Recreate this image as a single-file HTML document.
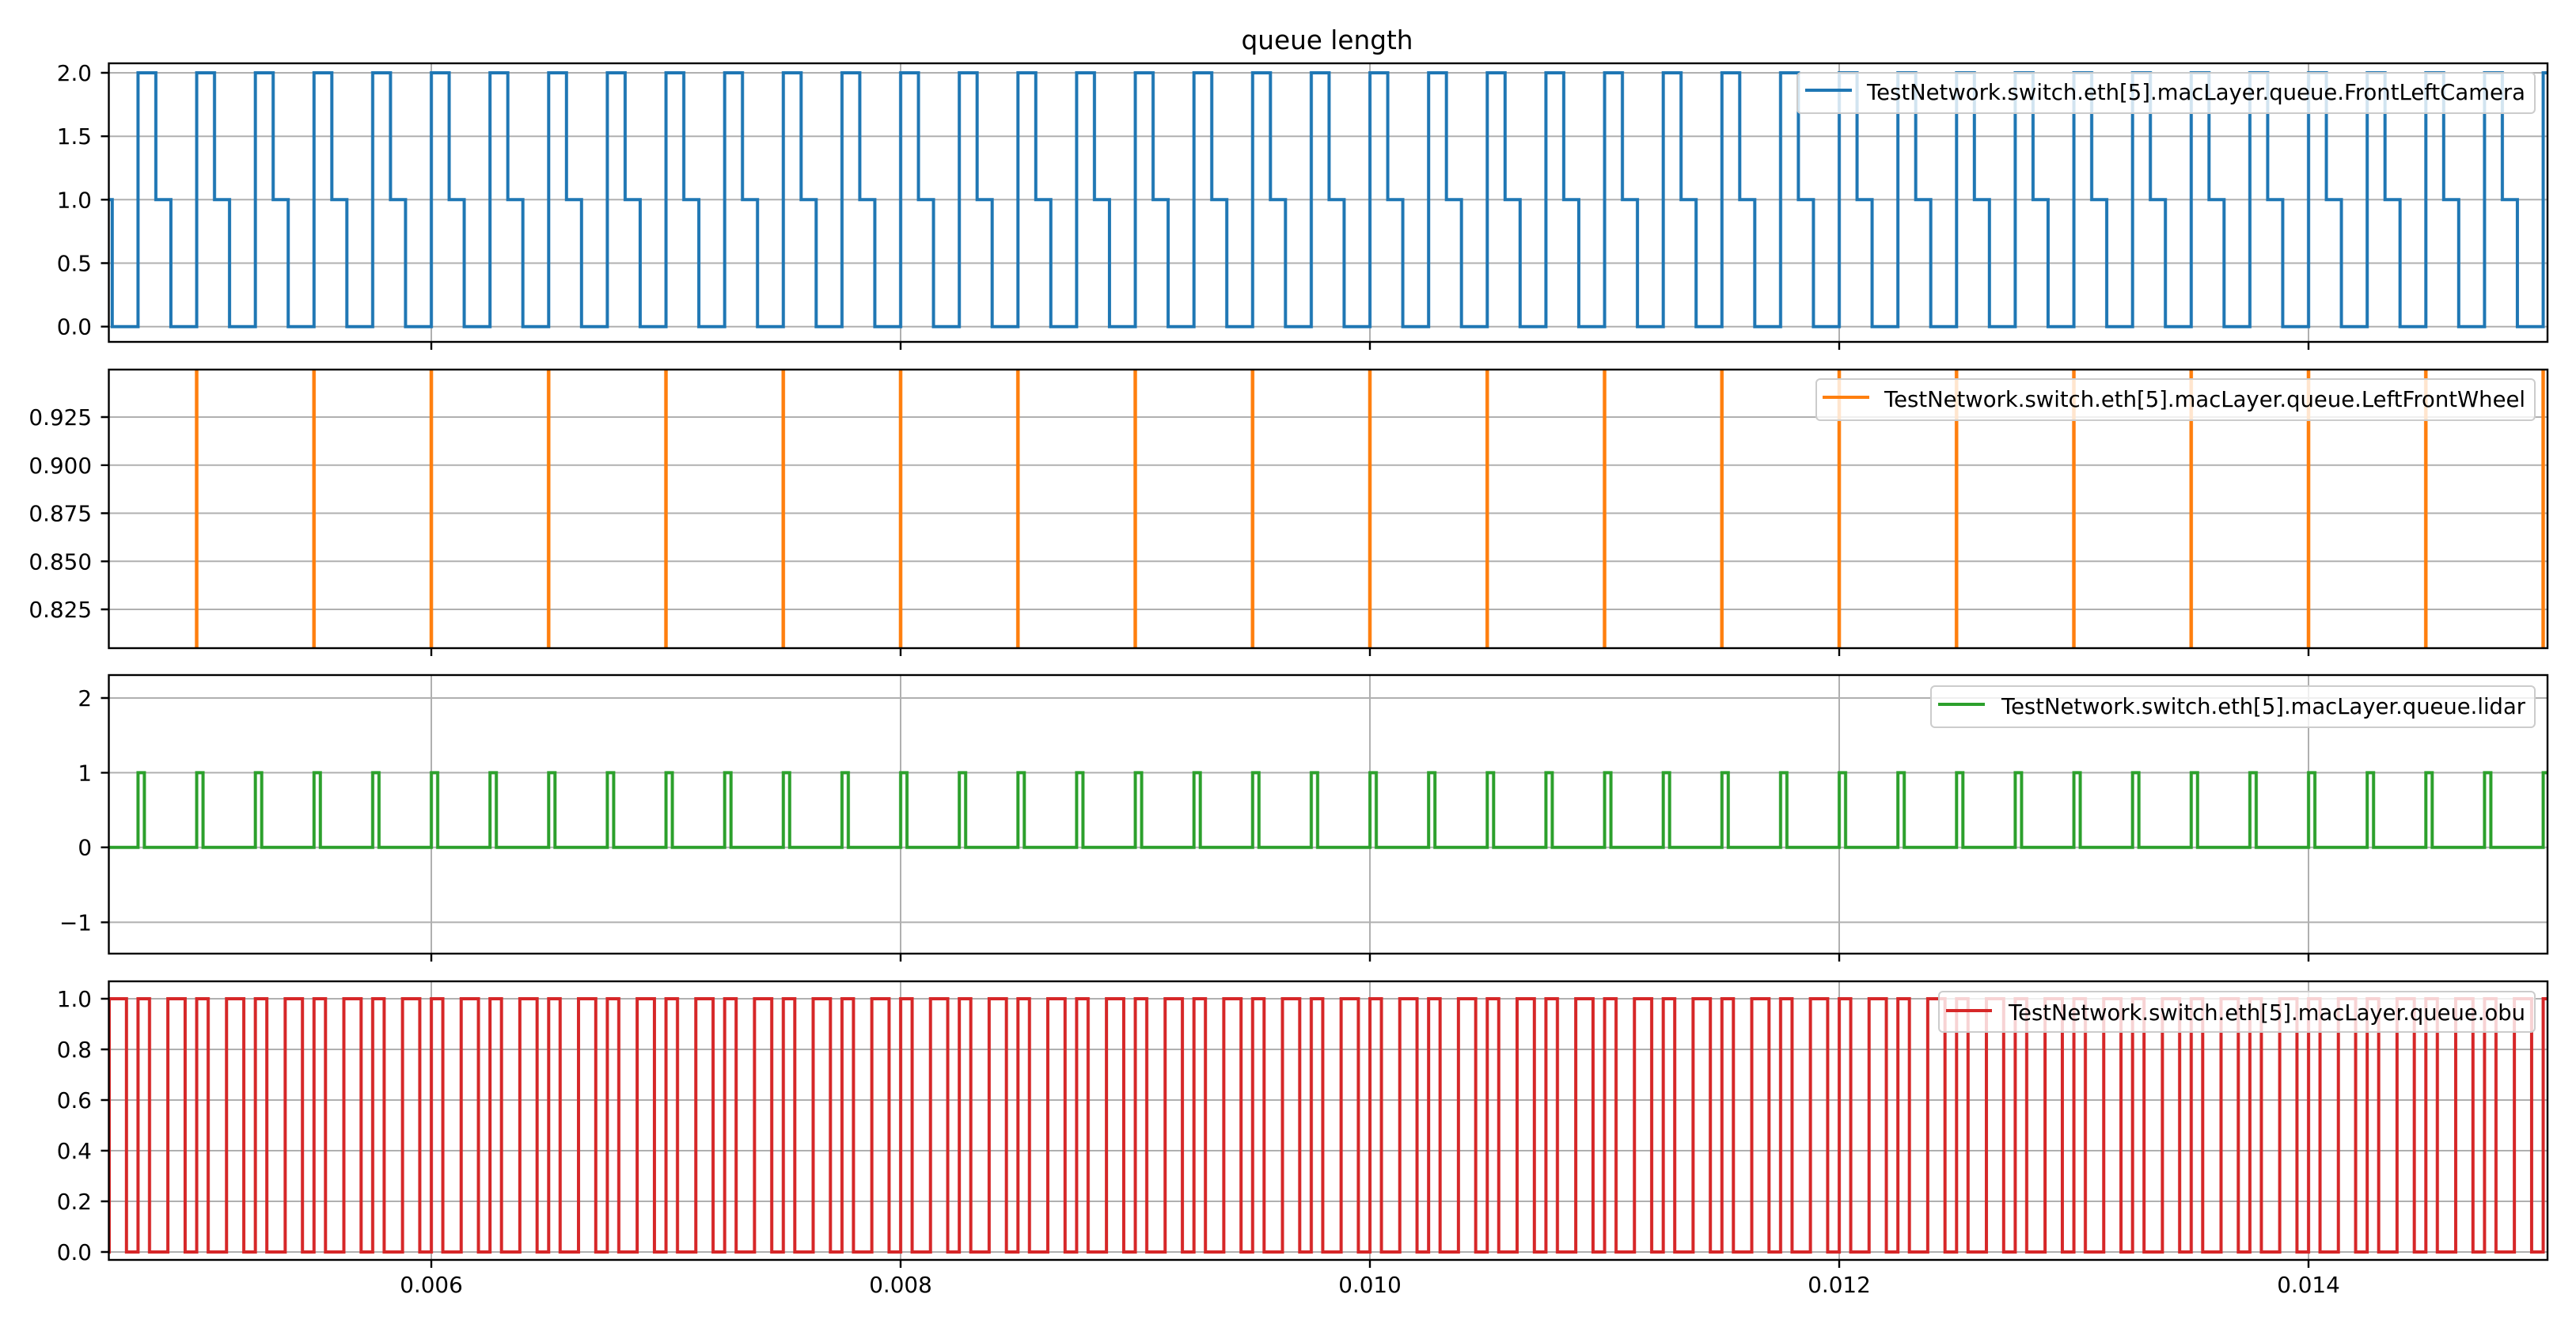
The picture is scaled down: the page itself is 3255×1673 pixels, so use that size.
<!DOCTYPE html>
<html><head><meta charset="utf-8"><style>html,body{margin:0;padding:0;background:#fff}svg{display:block}text{font-family:"DejaVu Sans","Liberation Sans",sans-serif;fill:#000}</style></head>
<body>
<svg width="3255" height="1673" viewBox="0 0 3255 1673" xmlns="http://www.w3.org/2000/svg">
<defs>
<pattern id="pb" patternUnits="userSpaceOnUse" x="76.2" y="0" width="74.125" height="1673"><path d="M-1,412.7 H24.1 V92 H46.6 V252.3 H65.6 V412.7 H75.2" fill="none" stroke="#1f77b4" stroke-width="4" stroke-linejoin="miter"/></pattern>
<pattern id="pr" patternUnits="userSpaceOnUse" x="92.2" y="0" width="74.125" height="1673"><path d="M-1,1582 H8.1 V1262 H22.6 V1582 H45.8 V1262 H67.6 V1582 H75.2" fill="none" stroke="#d62728" stroke-width="4"/></pattern>
<pattern id="pg" patternUnits="userSpaceOnUse" x="76.2" y="0" width="74.125" height="1673"><path d="M-1,1070.7 H24.1 V976.4 H32.1 V1070.7 H75.2" fill="none" stroke="#2ca02c" stroke-width="4"/></pattern>
<pattern id="po" patternUnits="userSpaceOnUse" x="174.5" y="0" width="148.25" height="1673"><path d="M74,0 V1673" fill="none" stroke="#ff7f0e" stroke-width="4.5"/></pattern>
</defs>
<rect width="3255" height="1673" fill="#fff"/>
<text x="1677" y="62" font-size="33" text-anchor="middle" textLength="217" lengthAdjust="spacingAndGlyphs">queue length</text>

<g stroke="#b0b0b0" stroke-width="2">
<!-- vertical grids -->
<path d="M545,80V432M1138,80V432M1731,80V432M2324,80V432M2917,80V432"/>
<path d="M545,467V819M1138,467V819M1731,467V819M2324,467V819M2917,467V819"/>
<path d="M545,853V1205M1138,853V1205M1731,853V1205M2324,853V1205M2917,853V1205"/>
<path d="M545,1240V1592M1138,1240V1592M1731,1240V1592M2324,1240V1592M2917,1240V1592"/>
<!-- horizontal grids -->
<path d="M137.5,92H3219M137.5,172.2H3219M137.5,252.3H3219M137.5,332.5H3219M137.5,412.7H3219"/>
<path d="M137.5,527H3219M137.5,587.8H3219M137.5,648.5H3219M137.5,709.3H3219M137.5,770H3219"/>
<path d="M137.5,882H3219M137.5,976.4H3219M137.5,1070.7H3219M137.5,1165.4H3219"/>
<path d="M137.5,1262H3219M137.5,1326H3219M137.5,1390H3219M137.5,1454H3219M137.5,1518H3219M137.5,1582H3219"/>
</g>

<rect x="137.5" y="80" width="3081.5" height="352" fill="url(#pb)"/>
<rect x="137.5" y="467" width="3081.5" height="352" fill="url(#po)"/>
<rect x="137.5" y="853" width="3081.5" height="352" fill="url(#pg)"/>
<rect x="137.5" y="1240" width="3081.5" height="352" fill="url(#pr)"/>

<g fill="none" stroke="#000" stroke-width="2.4">
<rect x="137.5" y="80" width="3081.5" height="352"/>
<rect x="137.5" y="467" width="3081.5" height="352"/>
<rect x="137.5" y="853" width="3081.5" height="352"/>
<rect x="137.5" y="1240" width="3081.5" height="352"/>
<!-- x ticks -->
<path d="M545,432v10M1138,432v10M1731,432v10M2324,432v10M2917,432v10"/>
<path d="M545,819v10M1138,819v10M1731,819v10M2324,819v10M2917,819v10"/>
<path d="M545,1205v10M1138,1205v10M1731,1205v10M2324,1205v10M2917,1205v10"/>
<path d="M545,1592v10M1138,1592v10M1731,1592v10M2324,1592v10M2917,1592v10"/>
<!-- y ticks -->
<path d="M137.5,92h-10M137.5,172.2h-10M137.5,252.3h-10M137.5,332.5h-10M137.5,412.7h-10"/>
<path d="M137.5,527h-10M137.5,587.8h-10M137.5,648.5h-10M137.5,709.3h-10M137.5,770h-10"/>
<path d="M137.5,882h-10M137.5,976.4h-10M137.5,1070.7h-10M137.5,1165.4h-10"/>
<path d="M137.5,1262h-10M137.5,1326h-10M137.5,1390h-10M137.5,1454h-10M137.5,1518h-10M137.5,1582h-10"/>
</g>

<g font-size="27.8" text-anchor="end">
<text x="116" y="102">2.0</text><text x="116" y="182.2">1.5</text><text x="116" y="262.3">1.0</text><text x="116" y="342.5">0.5</text><text x="116" y="422.7">0.0</text>
<text x="116" y="537">0.925</text><text x="116" y="597.8">0.900</text><text x="116" y="658.5">0.875</text><text x="116" y="719.3">0.850</text><text x="116" y="780">0.825</text>
<text x="116" y="892">2</text><text x="116" y="986.4">1</text><text x="116" y="1080.7">0</text><text x="116" y="1175.4">−1</text>
<text x="116" y="1272">1.0</text><text x="116" y="1336">0.8</text><text x="116" y="1400">0.6</text><text x="116" y="1464">0.4</text><text x="116" y="1528">0.2</text><text x="116" y="1592">0.0</text>
</g>
<g font-size="27.8" text-anchor="middle">
<text x="545" y="1633">0.006</text><text x="1138" y="1633">0.008</text><text x="1731" y="1633">0.010</text><text x="2324" y="1633">0.012</text><text x="2917" y="1633">0.014</text>
</g>

<g font-size="27.8">
<rect x="2271" y="92" width="932" height="51" rx="5" fill="#fff" fill-opacity="0.8" stroke="#cccccc" stroke-width="2"/>
<path d="M2281,114H2340" stroke="#1f77b4" stroke-width="4"/>
<text x="2359" y="126" textLength="832" lengthAdjust="spacingAndGlyphs">TestNetwork.switch.eth[5].macLayer.queue.FrontLeftCamera</text>

<rect x="2295" y="479" width="908" height="52" rx="5" fill="#fff" fill-opacity="0.8" stroke="#cccccc" stroke-width="2"/>
<path d="M2303,502H2362" stroke="#ff7f0e" stroke-width="4"/>
<text x="2381" y="514" textLength="810" lengthAdjust="spacingAndGlyphs">TestNetwork.switch.eth[5].macLayer.queue.LeftFrontWheel</text>

<rect x="2440" y="867" width="763" height="52" rx="5" fill="#fff" fill-opacity="0.8" stroke="#cccccc" stroke-width="2"/>
<path d="M2449,890H2508" stroke="#2ca02c" stroke-width="4"/>
<text x="2529" y="902" textLength="662" lengthAdjust="spacingAndGlyphs">TestNetwork.switch.eth[5].macLayer.queue.lidar</text>

<rect x="2450" y="1253" width="753" height="51" rx="5" fill="#fff" fill-opacity="0.8" stroke="#cccccc" stroke-width="2"/>
<path d="M2459,1277H2517" stroke="#d62728" stroke-width="4"/>
<text x="2538" y="1289" textLength="653" lengthAdjust="spacingAndGlyphs">TestNetwork.switch.eth[5].macLayer.queue.obu</text>
</g>
</svg>
</body></html>
